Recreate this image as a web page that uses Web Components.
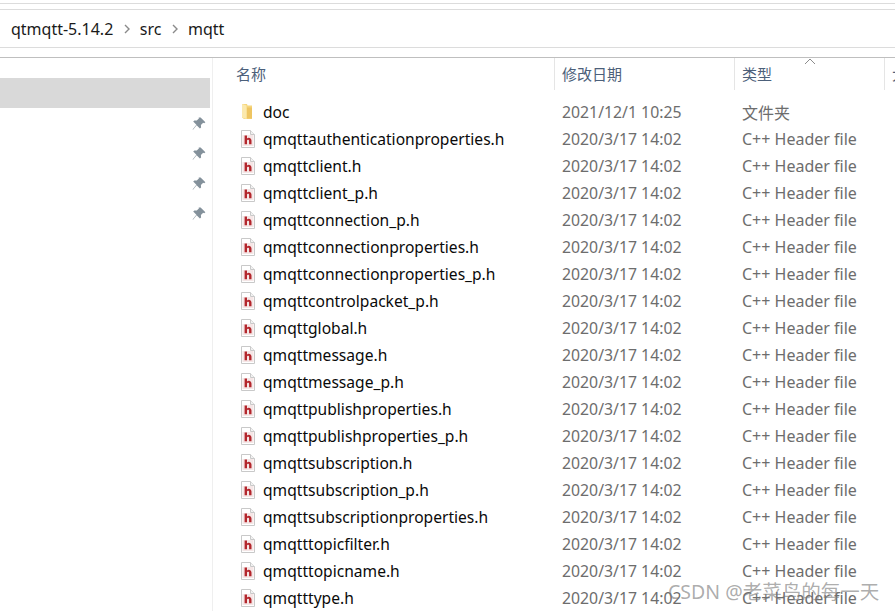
<!DOCTYPE html>
<html>
<head>
<meta charset="utf-8">
<style>
html,body{margin:0;height:100%;overflow:hidden;background:#fff;}
body{font-family:"Noto Sans","Noto Sans CJK SC",sans-serif;}
</style>
</head>
<body>
<address-bar>
  <span>qtmqtt-5.14.2</span><span>src</span><span>mqtt</span>
</address-bar>
<main-pane></main-pane>
<water-mark>CSDN @老菜鸟的每一天</water-mark>

<script>
const FONT = '"Noto Sans","Noto Sans CJK SC",sans-serif';

class AddressBar extends HTMLElement{
  constructor(){
    super();
    this.attachShadow({mode:'open'});
    this.shadowRoot.innerHTML = `
    <style>
    :host{display:block;height:58px;box-sizing:border-box;padding-top:3px;border-bottom:1px solid #bfbfbf;}
    .strip{height:5px;border-top:1px solid #dcdcdc;border-bottom:1px solid #dcdcdc;}
    .path{height:37px;display:flex;align-items:center;padding-left:11px;border-bottom:1px solid #dcdcdc;font:16px ${FONT};color:#1a1a1a;}
    .sep{display:flex;justify-content:center;width:26.5px;}
    .gap{height:9px;}
    </style>
    <div class="strip"></div>
    <div class="path" id="p"></div>
    <div class="gap"></div>`;
  }
  connectedCallback(){
    const p = this.shadowRoot.getElementById('p');
    [...this.children].forEach((c,i)=>{
      if(i){
        const s = document.createElement('span');
        s.className = 'sep';
        s.innerHTML = '<svg width="8" height="10" viewBox="0 0 8 10"><path d="M2 1l4 4-4 4" fill="none" stroke="#8a8a8a" stroke-width="1.4"/></svg>';
        p.appendChild(s);
      }
      const t = document.createElement('span');
      t.textContent = c.textContent;
      p.appendChild(t);
    });
  }
}
customElements.define('address-bar',AddressBar);

class PinIcon extends HTMLElement{
  constructor(){
    super();
    this.attachShadow({mode:'open'});
    this.shadowRoot.innerHTML = `
    <style>:host{display:block;height:14px;width:14px;}svg{display:block}</style>
    <svg width="14" height="14" viewBox="0 0 14 14"><path d="M8.6 0.6l4.8 4.6-1.2 1-1-.5-2.3 2.3.2 2.4-1.2 1.1L4.6 8.2 1 12.8 0.6 12.4 4.4 7.8 1.2 4.5 2.4 3.4l2.4.2 2.2-2.3-.4-.9z" fill="#84919b"/></svg>`;
  }
}
customElements.define('pin-icon',PinIcon);

class NavPane extends HTMLElement{
  constructor(){
    super();
    this.attachShadow({mode:'open'});
    this.shadowRoot.innerHTML = `
    <style>
    :host{display:block;width:213px;box-sizing:border-box;border-right:1px solid #efefef;padding-top:20px;height:100%;}
    .sel{height:30px;width:210px;background:#d9d9d9;}
    .pins{display:flex;flex-direction:column;align-items:flex-end;gap:16px;padding:9px 0 0 0;width:206px;}
    </style>
    <div class="sel"></div>
    <div class="pins"><pin-icon></pin-icon><pin-icon></pin-icon><pin-icon></pin-icon><pin-icon></pin-icon></div>`;
  }
}
customElements.define('nav-pane',NavPane);

class FileIcon extends HTMLElement{
  constructor(){
    super();
    this.attachShadow({mode:'open'});
    const folder = this.getAttribute('kind')==='folder';
    this.shadowRoot.innerHTML = `
    <style>:host{display:block;width:16px;height:18px;}svg{display:block}</style>
    ${folder ? `
    <svg width="16" height="18" viewBox="0 0 16 18">
      <path d="M2 1h5l.5 1.5h4.5v13.5H4l-2-1.5z" fill="#f6d67d"/>
      <path d="M2 1l4.5 1.5v13.5L2 14.5z" fill="#fbe9ae"/>
      <path d="M7 4.5h5v11H7z" fill="#eec562"/>
    </svg>` : `
    <svg width="16" height="18" viewBox="0 0 16 18">
      <path d="M1.5 .5h9l4 4v13h-13z" fill="#fff" stroke="#c9c9c9"/>
      <path d="M10.5 .5v4h4" fill="#f2f2f2" stroke="#c9c9c9"/>
      <rect x="2.5" y="5" width="11" height="11" fill="#f5e6e6"/>
      <path d="M4.6 5.5h2.4v3a2.7 2.7 0 0 1 4.5 1.9v3.9H9.1v-3.6c0-1.2-2.1-1.2-2.1 0v3.6H4.6z" fill="#b3262c"/>
    </svg>`}`;
  }
}
customElements.define('file-icon',FileIcon);

class FileRow extends HTMLElement{
  constructor(){
    super();
    this.attachShadow({mode:'open'});
    this.shadowRoot.innerHTML = `
    <style>
    :host{display:grid;grid-template-columns:342px 180px 1fr;height:27px;align-items:center;font:15.6px ${FONT};color:#6d6d6d;white-space:nowrap;}
    .name{display:flex;align-items:center;gap:7px;padding-left:27px;color:#0a0a0a;}
    .date{padding-left:7px;font-size:15.8px;}
    .type{padding-left:7px;font-size:16px;}
    </style>
    <div class="name"><file-icon kind="${this.getAttribute('kind')||'file'}"></file-icon><span>${this.getAttribute('name')}</span></div>
    <div class="date">${this.getAttribute('date')}</div>
    <div class="type">${this.getAttribute('type')}</div>`;
  }
}
customElements.define('file-row',FileRow);

class ListHeader extends HTMLElement{
  constructor(){
    super();
    this.attachShadow({mode:'open'});
    this.shadowRoot.innerHTML = `
    <style>
    :host{display:grid;grid-template-columns:342px 180px 150px 1fr;height:32px;font:15px ${FONT};color:#4c607a;white-space:nowrap;position:relative;}
    div{display:flex;align-items:center;padding:0 0 2px 7px;border-right:1px solid #e5e5e5;box-sizing:border-box;overflow:hidden;}
    div.first{padding-left:23px;}
    div.last{border:none;}
    svg{position:absolute;left:591px;top:0;}
    </style>
    <div class="first">名称</div><div>修改日期</div><div>类型</div><div class="last">大小</div>
    <svg width="12" height="7" viewBox="0 0 12 7"><path d="M1 6l5-5 5 5" fill="none" stroke="#8c8c8c"/></svg>`;
  }
}
customElements.define('list-header',ListHeader);

const FILES = ['qmqttauthenticationproperties.h','qmqttclient.h','qmqttclient_p.h','qmqttconnection_p.h',
  'qmqttconnectionproperties.h','qmqttconnectionproperties_p.h','qmqttcontrolpacket_p.h','qmqttglobal.h',
  'qmqttmessage.h','qmqttmessage_p.h','qmqttpublishproperties.h','qmqttpublishproperties_p.h',
  'qmqttsubscription.h','qmqttsubscription_p.h','qmqttsubscriptionproperties.h','qmqtttopicfilter.h',
  'qmqtttopicname.h','qmqtttype.h'];

class FileList extends HTMLElement{
  constructor(){
    super();
    this.attachShadow({mode:'open'});
    let rows = '<file-row kind="folder" name="doc" date="2021/12/1 10:25" type="文件夹"></file-row>';
    FILES.forEach(f=>{
      rows += `<file-row name="${f}" date="2020/3/17 14:02" type="C++ Header file"></file-row>`;
    });
    this.shadowRoot.innerHTML = `
    <style>
    :host{display:block;flex:1;min-width:0;overflow:hidden;}
    .rows{padding-top:8px;}
    </style>
    <list-header></list-header>
    <div class="rows">${rows}</div>`;
  }
}
customElements.define('file-list',FileList);

class MainPane extends HTMLElement{
  constructor(){
    super();
    this.attachShadow({mode:'open'});
    this.shadowRoot.innerHTML = `
    <style>:host{display:flex;height:553px;overflow:hidden;}</style>
    <nav-pane></nav-pane><file-list></file-list>`;
  }
}
customElements.define('main-pane',MainPane);

class WaterMark extends HTMLElement{
  constructor(){
    super();
    this.attachShadow({mode:'open'});
    this.shadowRoot.innerHTML = `
    <style>:host{position:absolute;left:668px;top:576px;font:19.5px ${FONT};color:rgba(120,120,120,.62);white-space:nowrap;}</style>
    <slot></slot>`;
  }
}
customElements.define('water-mark',WaterMark);
</script>
</body>
</html>
